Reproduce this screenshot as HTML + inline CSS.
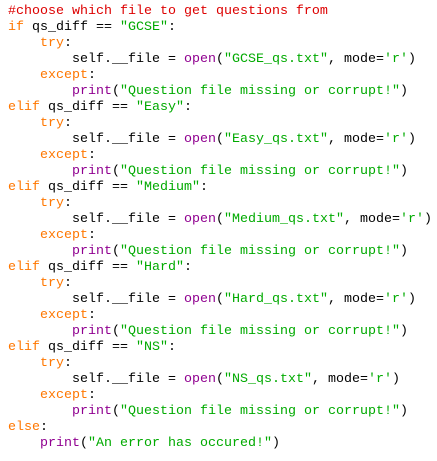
<html><head><style>
body{margin:0;background:#fff;}
pre{margin:0;position:absolute;left:8px;top:4px;font-family:"Liberation Mono",monospace;font-size:13.33px;line-height:16px;color:#000;}
.k{color:#ff7700}.c{color:#dd0000}.s{color:#00aa00}.b{color:#900090}
</style></head><body><pre><span class="c">#choose which file to get questions from</span>
<span class="k">if</span> qs_diff == <span class="s">"GCSE"</span>:
    <span class="k">try</span>:
        self.__file = <span class="b">open</span>(<span class="s">"GCSE_qs.txt"</span>, mode=<span class="s">'r'</span>)
    <span class="k">except</span>:
        <span class="b">print</span>(<span class="s">"Question file missing or corrupt!"</span>)
<span class="k">elif</span> qs_diff == <span class="s">"Easy"</span>:
    <span class="k">try</span>:
        self.__file = <span class="b">open</span>(<span class="s">"Easy_qs.txt"</span>, mode=<span class="s">'r'</span>)
    <span class="k">except</span>:
        <span class="b">print</span>(<span class="s">"Question file missing or corrupt!"</span>)
<span class="k">elif</span> qs_diff == <span class="s">"Medium"</span>:
    <span class="k">try</span>:
        self.__file = <span class="b">open</span>(<span class="s">"Medium_qs.txt"</span>, mode=<span class="s">'r'</span>)
    <span class="k">except</span>:
        <span class="b">print</span>(<span class="s">"Question file missing or corrupt!"</span>)
<span class="k">elif</span> qs_diff == <span class="s">"Hard"</span>:
    <span class="k">try</span>:
        self.__file = <span class="b">open</span>(<span class="s">"Hard_qs.txt"</span>, mode=<span class="s">'r'</span>)
    <span class="k">except</span>:
        <span class="b">print</span>(<span class="s">"Question file missing or corrupt!"</span>)
<span class="k">elif</span> qs_diff == <span class="s">"NS"</span>:
    <span class="k">try</span>:
        self.__file = <span class="b">open</span>(<span class="s">"NS_qs.txt"</span>, mode=<span class="s">'r'</span>)
    <span class="k">except</span>:
        <span class="b">print</span>(<span class="s">"Question file missing or corrupt!"</span>)
<span class="k">else</span>:
    <span class="b">print</span>(<span class="s">"An error has occured!"</span>)</pre></body></html>
